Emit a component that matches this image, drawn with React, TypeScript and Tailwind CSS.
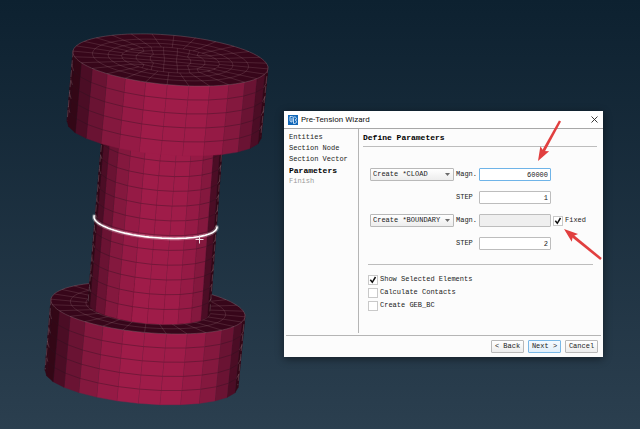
import { useState } from "react";

type Point = [number, number];

// An elliptical slice through the bolt: centre and half width.
type Slice = { cx: number; cy: number; r: number };

const HEAD_TOP: Slice = { cx: 170.5, cy: 60, r: 97.5 };
const HEAD_BOTTOM: Slice = { cx: 164, cy: 130, r: 97 };
const SHAFT_TOP: Slice = { cx: 163, cy: 131, r: 60 };
const SHAFT_BOTTOM: Slice = { cx: 149, cy: 308, r: 61 };
const FLANGE_TOP: Slice = { cx: 148, cy: 308, r: 97 };
const FLANGE_BOTTOM: Slice = { cx: 141.5, cy: 379, r: 96.5 };

function project(s: Slice, u: number, v: number): Point {
  return [s.cx + s.r * u, s.cy + s.r * (0.082 * u + 0.255 * v)];
}

function onRim(s: Slice, deg: number, k = 1): Point {
  const a = (deg * Math.PI) / 180;
  return project(s, k * Math.cos(a), k * Math.sin(a));
}

function between(a: Slice, b: Slice, t: number): Slice {
  return {
    cx: a.cx + (b.cx - a.cx) * t,
    cy: a.cy + (b.cy - a.cy) * t,
    r: a.r + (b.r - a.r) * t,
  };
}

function toPath(points: Point[], close = false) {
  const d = points.map(([x, y]) => `${x.toFixed(1)} ${y.toFixed(1)}`).join("L");
  return `M${d}${close ? "Z" : ""}`;
}

function rim(s: Slice, k = 1, from = 0, to = 360): Point[] {
  const points: Point[] = [];
  for (let a = from; a <= to; a += 4) points.push(onRim(s, a, k));
  return points;
}

function shade(deg: number) {
  const off = Math.abs(deg - 86);
  if (off < 24) return "#9f1c49";
  if (off < 35) return "#951a45";
  if (off < 48) return "#84183e";
  if (off < 61) return "#6a1333";
  if (off < 74) return "#4b0d25";
  return "#330716";
}

function Barrel({
  top,
  bottom,
  segments,
  rows,
}: {
  top: Slice;
  bottom: Slice;
  segments: number;
  rows: number;
}) {
  const step = 360 / segments;
  const facets: { from: number; to: number }[] = [];
  for (let a = 92 - step * Math.ceil(96 / step); a < 188; a += step) {
    const from = Math.max(a, -4);
    const to = Math.min(a + step, 184);
    if (to > from) facets.push({ from, to });
  }

  return (
    <g>
      {facets.map(({ from, to }) => {
        const mid = (from + to) / 2;
        const edge = mid < 18 || mid > 165;
        return (
          <g key={from}>
            <path
              d={toPath(
                [onRim(top, from), onRim(top, to), onRim(bottom, to), onRim(bottom, from)],
                true,
              )}
              fill={shade(mid)}
              stroke={shade(mid)}
              strokeWidth={0.4}
            />
            <path
              d={toPath([onRim(top, to), onRim(bottom, to)])}
              stroke="#2a1020"
              strokeOpacity={0.5}
              strokeWidth={0.6}
            />
            {Array.from({ length: rows - 1 }, (_, i) => {
              const s = between(top, bottom, (i + 1) / rows);
              return (
                <path
                  key={i}
                  d={toPath([onRim(s, from), onRim(s, to)])}
                  stroke={edge ? "#a98a94" : "#2a1020"}
                  strokeOpacity={edge ? 0.45 : 0.6}
                  strokeWidth={0.6}
                />
              );
            })}
          </g>
        );
      })}
      <path
        d={`${toPath([onRim(top, 184), onRim(bottom, 184)])}${toPath([onRim(top, -4), onRim(bottom, -4)])}`}
        stroke="#9d8a94"
        strokeOpacity={0.55}
        strokeWidth={0.6}
        strokeDasharray="7 3"
      />
    </g>
  );
}

// Grid coordinates in [-1, 1] pushed out to a disc.
function squareToDisc(x: number, y: number): Point {
  const len = Math.hypot(x, y);
  if (len === 0) return [0, 0];
  const k = Math.max(Math.abs(x), Math.abs(y)) / len;
  const mix = 0.35 + 0.65 * Math.max(Math.abs(x), Math.abs(y));
  const f = 1 - mix + mix * k;
  return [x * f, y * f];
}

function Cap({ slice, core }: { slice: Slice; core?: boolean }) {
  const n = 7;
  const lines: string[] = [];
  for (let i = 0; i < 28; i++) {
    const a = 92 + (i * 360) / 28;
    lines.push(toPath([onRim(slice, a), onRim(slice, a, 0.5)]));
  }
  for (const k of [0.8, 0.64, 0.5]) lines.push(toPath(rim(slice, k)));
  if (core) {
    for (let i = 1; i < n; i++) {
      const row: Point[] = [];
      const col: Point[] = [];
      for (let j = 0; j <= n; j++) {
        const p = (2 * i) / n - 1;
        const q = (2 * j) / n - 1;
        const [rx, ry] = squareToDisc(q, p);
        const [cx, cy] = squareToDisc(p, q);
        row.push(project(slice, rx * 0.5, ry * 0.5));
        col.push(project(slice, cx * 0.5, cy * 0.5));
      }
      lines.push(toPath(row), toPath(col));
    }
  }

  return (
    <g>
      <path d={toPath(rim(slice), true)} fill="#37061a" stroke="#7d5663" strokeWidth={0.5} />
      <path d={lines.join("")} stroke="#b08a90" strokeOpacity={0.34} strokeWidth={0.6} />
    </g>
  );
}

function BoltModel() {
  const section: Slice = { cx: 155.5, cy: 222, r: 61.5 };
  const cut = toPath(rim(section, 1, 0, 184));
  return (
    <svg
      width="284"
      height="429"
      viewBox="0 0 284 429"
      fill="none"
      role="img"
      aria-label="Meshed bolt"
      className="shrink-0"
    >
      <Barrel top={FLANGE_TOP} bottom={FLANGE_BOTTOM} segments={28} rows={5} />
      <Cap slice={FLANGE_TOP} />
      <Barrel top={SHAFT_TOP} bottom={SHAFT_BOTTOM} segments={24} rows={12} />
      <Barrel top={HEAD_TOP} bottom={HEAD_BOTTOM} segments={28} rows={5} />
      <Cap slice={HEAD_TOP} core />
      <path d={cut} stroke="#fff" strokeOpacity={0.25} strokeWidth={4} strokeLinecap="round" />
      <path d={cut} stroke="#fff" strokeWidth={1.6} strokeLinecap="round" />
      <path d="M195.500 239.500h8M199.500 235.500v8" stroke="#f3e4ea" strokeWidth={1} />
    </svg>
  );
}

function AppIcon() {
  return (
    <svg width="10" height="10" viewBox="0 0 20 20" fill="none" aria-hidden="true">
      <path fill="#1268b8" d="M0 0h20v20H0z" />
      <path
        d="M4 3v7c0 3 1 4 4 4M4 3h3c3 0 4 2 4 4v10M8 6v8M11 4h2c5 0 5 6 1 6 4 0 4 7-1 7h-2"
        stroke="#e4f1ff"
        strokeWidth="1.7"
      />
    </svg>
  );
}

function Arrow({ from, to }: { from: Point; to: Point }) {
  const angle = (Math.atan2(to[1] - from[1], to[0] - from[0]) * 180) / Math.PI;
  const length = Math.hypot(to[0] - from[0], to[1] - from[1]);
  return (
    <g transform={`translate(${to[0]} ${to[1]}) rotate(${angle})`} fill="#e13f3f">
      <path d={`M${-length} -1.2L-9 -1.500V1.500L${-length} 1.2Z`} />
      <path d="M0 0L-14 -5L-11.500 0L-14 5Z" />
    </g>
  );
}

function LoadSelect({ label, options }: { label: string; options: string[] }) {
  return (
    <div className="relative">
      <select
        aria-label={label}
        className="block h-[13px] w-full appearance-none rounded-[1px] border border-[#b9b9b9] bg-linear-to-b from-white to-[#ededed] pl-[2px] text-[7px] leading-[11px] text-[#222]"
      >
        {options.map((o) => (
          <option key={o}>{o}</option>
        ))}
      </select>
      <svg
        width="5"
        height="3"
        viewBox="0 0 5 3"
        aria-hidden="true"
        className="pointer-events-none absolute top-[5px] right-[4px]"
      >
        <path d="M0 0h5L2.500 3z" fill="#6b6b6b" />
      </svg>
    </div>
  );
}

const inputClasses =
  "block h-[13px] w-full min-w-0 rounded-[1px] border border-[#bdbdbd] bg-white px-[2px] text-right text-[7px] leading-[11px] text-[#222] outline-none focus:border-[#6fb4e8] disabled:bg-[#efefef]";

function Tick({
  label,
  checked,
  onChange,
}: {
  label: string;
  checked: boolean;
  onChange: (checked: boolean) => void;
}) {
  return (
    <label className="flex items-center gap-[2px] whitespace-nowrap">
      <span className="relative block size-[10px] shrink-0">
        <input
          type="checkbox"
          checked={checked}
          onChange={(e) => onChange(e.target.checked)}
          className="block size-[10px] appearance-none border border-[#c9c9c9] bg-white"
        />
        {checked && (
          <svg
            width="10"
            height="10"
            viewBox="0 0 10 10"
            fill="none"
            aria-hidden="true"
            className="pointer-events-none absolute inset-0"
          >
            <path d="M2.300 4.800L4.300 7.300L7.500 2" stroke="#111" strokeWidth="1.500" />
          </svg>
        )}
      </span>
      {label}
    </label>
  );
}

const steps = ["Entities", "Section Node", "Section Vector", "Parameters", "Finish"];

function stepClasses(step: string) {
  if (step === "Parameters") return "text-[8px] font-bold text-black";
  if (step === "Finish") return "text-[#9a9a9a]";
  return "";
}

const buttonClasses =
  "h-[13px] w-[33px] rounded-[1px] border bg-linear-to-b text-center leading-[11px] whitespace-nowrap";

export default function App() {
  const [load, setLoad] = useState("60000");
  const [loadStep, setLoadStep] = useState("1");
  const [boundary, setBoundary] = useState("");
  const [boundaryStep, setBoundaryStep] = useState("2");
  const [fixed, setFixed] = useState(true);
  const [showSelected, setShowSelected] = useState(true);
  const [contacts, setContacts] = useState(false);
  const [gebBc, setGebBc] = useState(false);

  return (
    <main className="flex min-h-screen items-start bg-linear-to-b from-[#0d2130] to-[#2b3f4f]">
      <BoltModel />

      <section
        aria-labelledby="wizard-title"
        className="relative mt-[111px] mr-[37px] flex-1 bg-[#fcfcfc] font-['Liberation_Mono',monospace] text-[7px] leading-[11px] text-[#222] shadow-[0_2px_8px_rgba(0,0,0,0.45)]"
      >
        <header className="flex h-[18px] items-center gap-[3px] border-b border-[#a8a8a8] bg-white pr-[5px] pl-1">
          <AppIcon />
          <h1
            id="wizard-title"
            className="flex-1 font-[Roboto,sans-serif] text-[8px] text-[#111]"
          >
            Pre-Tension Wizard
          </h1>
          <button type="button" aria-label="Close">
            <svg width="7" height="7" viewBox="0 0 7 7" aria-hidden="true">
              <path d="M.5.5l6 6M6.500.5l-6 6" stroke="#222" strokeWidth=".9" />
            </svg>
          </button>
        </header>

        <div className="flex">
          <ol className="mb-[2px] h-[204px] w-[75px] border-r border-[#b5b5b5] pt-[3px] pl-[5px]">
            {steps.map((step) => (
              <li key={step} className={stepClasses(step)}>
                {step}
              </li>
            ))}
          </ol>

          <div className="flex-1 pt-[3px] pr-[6px] pl-[4px]">
            <h2 className="border-b border-[#bdbdbd] pb-[3px] text-[8px] font-bold text-black">
              Define Parameters
            </h2>

            <div className="mt-[21px] grid grid-cols-[84px_21px_1fr_44px] items-center gap-x-[2px] gap-y-[10px] pl-[7px]">
              <LoadSelect label="Load type" options={["Create *CLOAD", "Create *DLOAD"]} />
              <label htmlFor="load">Magn.</label>
              <input
                id="load"
                value={load}
                onChange={(e) => setLoad(e.target.value)}
                autoFocus
                className={`${inputClasses} caret-transparent`}
              />

              <label htmlFor="load-step" className="col-start-2">
                STEP
              </label>
              <input
                id="load-step"
                value={loadStep}
                onChange={(e) => setLoadStep(e.target.value)}
                className={inputClasses}
              />

              <div className="col-start-1">
                <LoadSelect label="Boundary type" options={["Create *BOUNDARY"]} />
              </div>
              <label htmlFor="boundary">Magn.</label>
              <input
                id="boundary"
                value={boundary}
                onChange={(e) => setBoundary(e.target.value)}
                disabled={fixed}
                className={inputClasses}
              />
              <Tick label="Fixed" checked={fixed} onChange={setFixed} />

              <label htmlFor="boundary-step" className="col-start-2">
                STEP
              </label>
              <input
                id="boundary-step"
                value={boundaryStep}
                onChange={(e) => setBoundaryStep(e.target.value)}
                className={inputClasses}
              />
            </div>

            <div className="mt-[14px] mr-1 ml-[5px] flex flex-col gap-[2px] border-t border-[#bdbdbd] pt-[9px]">
              <Tick
                label="Show Selected Elements"
                checked={showSelected}
                onChange={setShowSelected}
              />
              <Tick label="Calculate Contacts" checked={contacts} onChange={setContacts} />
              <Tick label="Create GEB_BC" checked={gebBc} onChange={setGebBc} />
            </div>
          </div>
        </div>

        <footer className="mx-[2px] flex h-[22px] items-center justify-end gap-1 border-t border-[#b5b5b5] pr-[3px]">
          <button type="button" className={`${buttonClasses} border-[#b9b9b9] from-white to-[#ededed]`}>
            &lt; Back
          </button>
          <button type="button" className={`${buttonClasses} border-[#7ab8e6] from-[#f4faff] to-[#e2effa]`}>
            Next &gt;
          </button>
          <button type="button" className={`${buttonClasses} border-[#b9b9b9] from-white to-[#ededed]`}>
            Cancel
          </button>
        </footer>

        <svg
          width="319"
          height="246"
          viewBox="284 111 319 246"
          aria-hidden="true"
          className="pointer-events-none absolute top-0 right-0"
        >
          <Arrow from={[560, 121]} to={[538, 161]} />
          <Arrow from={[601, 259]} to={[564, 229]} />
        </svg>
      </section>
    </main>
  );
}
